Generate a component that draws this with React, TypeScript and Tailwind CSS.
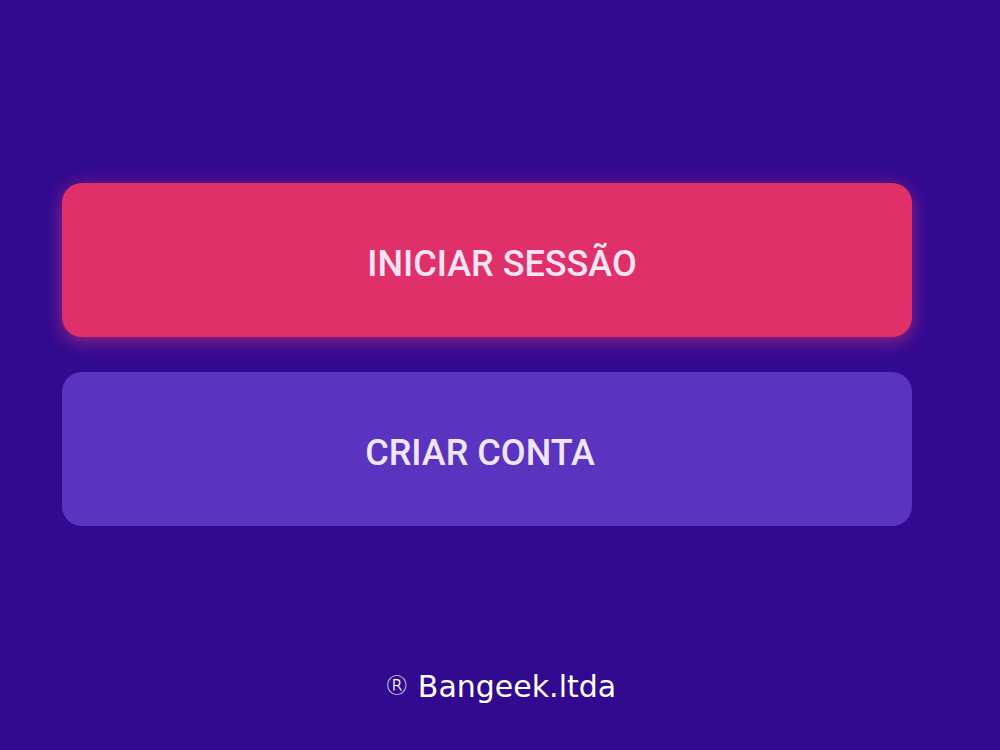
export default function App() {
  return (
    <div className="w-[1000px] h-[750px] bg-[#320a90] flex flex-col items-center overflow-hidden" style={{ fontFamily: "Roboto, sans-serif" }}>
      <div className="w-[850px] mt-[183px] flex flex-col gap-[35px] mr-[26px]">
        <button className="h-[154px] rounded-[20px] bg-[#e0306a] text-[#f6e3f4] text-[36px] font-medium pt-[8px] pl-[30px] shadow-[0_4px_18px_rgba(236,60,120,0.55)]">
          INICIAR SESSÃO
        </button>
        <button className="h-[154px] rounded-[20px] bg-[#5a33bf] text-[#f0e6fb] text-[36px] font-medium pt-[8px] pr-[14px]">
          CRIAR CONTA
        </button>
      </div>
      <div className="mt-[138px] text-white text-[30px] flex items-center gap-[8px]" style={{ fontFamily: "'DejaVu Sans', sans-serif" }}>
        <span className="text-[26px] font-light">®</span>
        <span>Bangeek.ltda</span>
      </div>
    </div>
  );
}
